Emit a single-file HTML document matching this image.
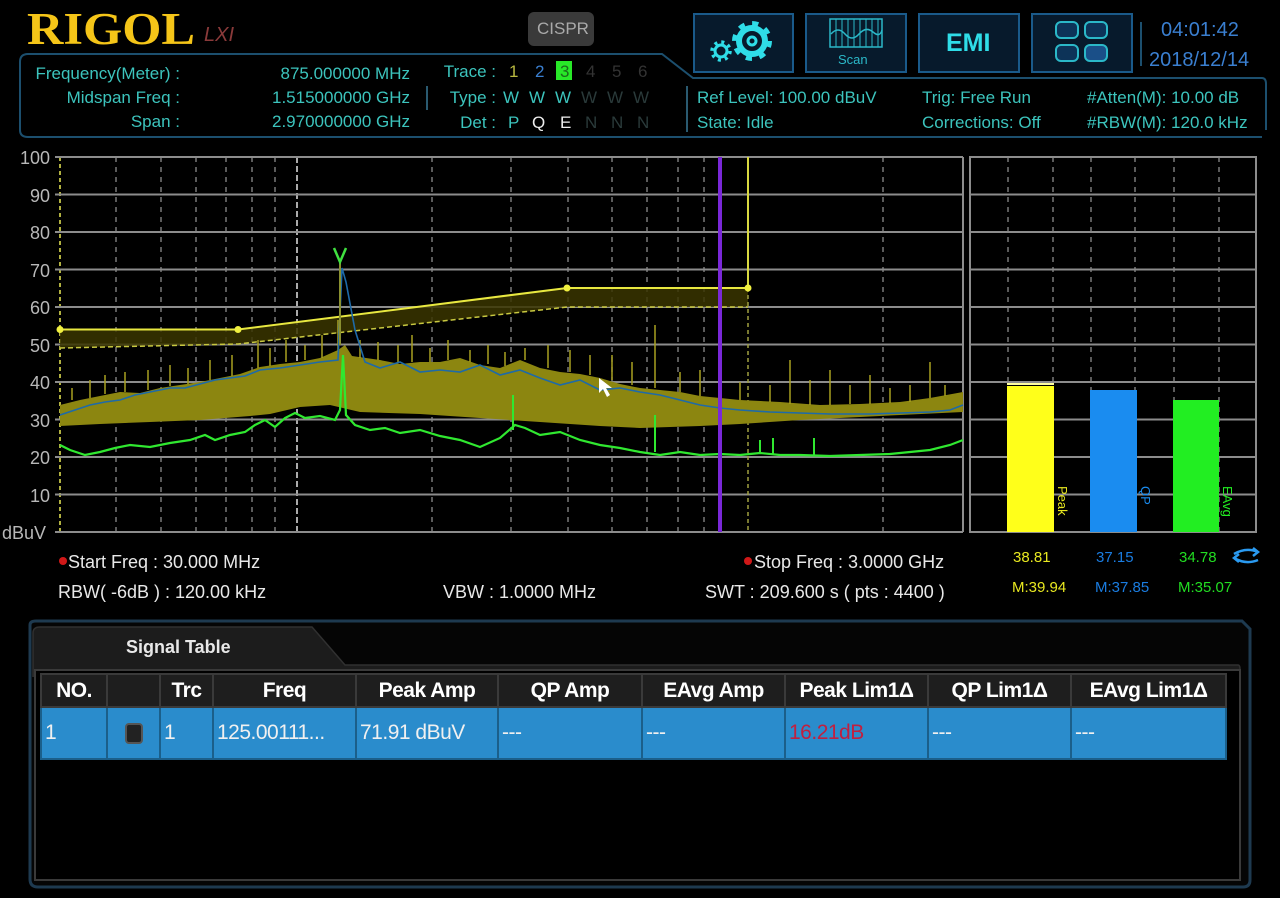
<!DOCTYPE html>
<html><head><meta charset="utf-8">
<style>
html,body{margin:0;padding:0;background:#000;}
body{width:1280px;height:898px;position:relative;overflow:hidden;font-family:"Liberation Sans",sans-serif;}
.t{position:absolute;white-space:nowrap;line-height:1;}
.c{color:#3cc4bd;font-size:17px;}
.w{color:#e8e8e8;font-size:18px;}
.ax{color:#b8b8b8;font-size:18px;text-align:right;width:50px;left:0;}
table{border-collapse:collapse;position:absolute;left:40px;top:673px;table-layout:fixed;width:1185px;}
td{border:2px solid #3a3a3a;padding:0 3px;font-size:21px;color:#fff;overflow:hidden;white-space:nowrap;}
thead td{background:#1e1e1e;font-weight:bold;text-align:center;height:31px;letter-spacing:-0.5px;}
tbody td{background:#2a8ccc;height:50px;color:#f0f0f0;border-color:#1b5f8a;letter-spacing:-0.5px;}
</style></head><body>

<div class="t" style="left:27px;top:7px;font-family:'Liberation Serif',serif;font-weight:bold;font-size:45px;color:#f5c518;transform:scaleX(1.12);transform-origin:left top;">RIGOL</div>
<div class="t" style="left:204px;top:25px;font-style:italic;font-size:20px;color:#8a3a3a;">LXI</div>
<div style="position:absolute;left:528px;top:12px;width:66px;height:34px;background:#3a3a3a;border-radius:6px;"></div>
<div class="t" style="left:537px;top:20px;font-size:17px;color:#aaa;">CISPR</div>

<svg style="position:absolute;left:0;top:0" width="1280" height="150">
 <path d="M28 54 L662 54 L693 78 L1262 78 Q1266 78 1266 84 L1266 130" fill="none" stroke="#1c4f6e" stroke-width="2"/>
 <path d="M20 62 Q20 54 28 54 M20 62 L20 130 Q20 137 28 137 L1262 137" fill="none" stroke="#1c4f6e" stroke-width="2"/>
 <line x1="427" y1="86" x2="427" y2="110" stroke="#2a5a70" stroke-width="2"/>
 <line x1="687" y1="86" x2="687" y2="132" stroke="#2a5a70" stroke-width="2"/>
 <line x1="1141" y1="22" x2="1141" y2="66" stroke="#1c4f6e" stroke-width="2"/>
 <g fill="#071a2c" stroke="#1a5a8a" stroke-width="2">
  <rect x="694" y="14" width="99" height="58"/>
  <rect x="806" y="14" width="100" height="58"/>
  <rect x="919" y="14" width="100" height="58"/>
  <rect x="1032" y="14" width="100" height="58"/>
 </g>
 <circle cx="752" cy="41" r="13" fill="none" stroke="#2fdde8" stroke-width="6"/>
 <circle cx="752" cy="41" r="17" fill="none" stroke="#2fdde8" stroke-width="6" stroke-dasharray="6 7.35"/>
 <circle cx="752" cy="41" r="4" fill="none" stroke="#2fdde8" stroke-width="3"/>
 <circle cx="721" cy="51" r="6" fill="none" stroke="#2fdde8" stroke-width="3"/>
 <circle cx="721" cy="51" r="9" fill="none" stroke="#2fdde8" stroke-width="3.5" stroke-dasharray="3 4.07"/>
 <rect x="830" y="19" width="52" height="28" fill="none" stroke="#2bb8c8" stroke-width="1.5"/>
 <path d="M836 19V47M842 19V47M848 19V47M854 19V47M860 19V47M866 19V47M872 19V47M878 19V47" stroke="#2bb8c8" stroke-width="1"/>
 <path d="M831 34 Q838 26 845 34 T859 34 T873 32 T882 30" fill="none" stroke="#2bb8c8" stroke-width="1.5"/>
 <g fill="#0d3358" stroke="#2bb8c8" stroke-width="2">
  <rect x="1056" y="22" width="22" height="16" rx="5"/>
  <rect x="1085" y="22" width="22" height="16" rx="5"/>
  <rect x="1056" y="45" width="22" height="16" rx="5"/>
  <rect x="1085" y="45" width="22" height="16" rx="5" fill="#1a4f88"/>
 </g>
</svg>
<div class="t" style="left:838px;top:53px;font-size:13px;color:#2bb8c8;">Scan</div>
<div class="t" style="left:946px;top:31px;font-size:25px;font-weight:bold;color:#2fdde8;">EMI</div>
<div class="t" style="left:1161px;top:20px;font-size:20px;color:#3a7fd0;">04:01:42</div>
<div class="t" style="left:1149px;top:50px;font-size:20px;color:#3a7fd0;">2018/12/14</div>

<div class="t c" style="left:0;width:180px;text-align:right;top:65px;">Frequency(Meter) :</div>
<div class="t c" style="left:0;width:180px;text-align:right;top:89px;">Midspan Freq :</div>
<div class="t c" style="left:0;width:180px;text-align:right;top:113px;">Span :</div>
<div class="t c" style="left:200px;width:210px;text-align:right;top:65px;">875.000000 MHz</div>
<div class="t c" style="left:200px;width:210px;text-align:right;top:89px;">1.515000000 GHz</div>
<div class="t c" style="left:200px;width:210px;text-align:right;top:113px;">2.970000000 GHz</div>
<div class="t c" style="left:400px;width:96px;text-align:right;top:63px;">Trace :</div>
<div class="t c" style="left:400px;width:96px;text-align:right;top:89px;">Type :</div>
<div class="t c" style="left:400px;width:96px;text-align:right;top:114px;">Det :</div>
<div class="t c" style="left:509px;top:63px;color:#b8b840;">1</div>
<div class="t c" style="left:535px;top:63px;color:#3a7fd0;">2</div>
<div style="position:absolute;left:556px;top:61px;width:16px;height:19px;background:#28e828;"></div>
<div class="t c" style="left:560px;top:63px;color:#1a6a1a;">3</div>
<div class="t c" style="left:586px;top:63px;color:#333;">4</div>
<div class="t c" style="left:612px;top:63px;color:#333;">5</div>
<div class="t c" style="left:638px;top:63px;color:#333;">6</div>
<div class="t c" style="left:503px;top:89px;">W</div><div class="t c" style="left:529px;top:89px;">W</div><div class="t c" style="left:555px;top:89px;">W</div>
<div class="t c" style="left:581px;top:89px;color:#2a3a3a;">W</div><div class="t c" style="left:607px;top:89px;color:#2a3a3a;">W</div><div class="t c" style="left:633px;top:89px;color:#2a3a3a;">W</div>
<div class="t c" style="left:508px;top:114px;">P</div><div class="t c" style="left:532px;top:114px;color:#eee;">Q</div><div class="t c" style="left:560px;top:114px;color:#eee;">E</div>
<div class="t c" style="left:585px;top:114px;color:#2a3a3a;">N</div><div class="t c" style="left:611px;top:114px;color:#2a3a3a;">N</div><div class="t c" style="left:637px;top:114px;color:#2a3a3a;">N</div>

<div class="t c" style="left:697px;top:89px;">Ref Level: 100.00 dBuV</div>
<div class="t c" style="left:697px;top:114px;">State: Idle</div>
<div class="t c" style="left:922px;top:89px;">Trig: Free Run</div>
<div class="t c" style="left:922px;top:114px;">Corrections: Off</div>
<div class="t c" style="left:1087px;top:89px;">#Atten(M): 10.00 dB</div>
<div class="t c" style="left:1087px;top:114px;">#RBW(M): 120.0 kHz</div>

<div class="t ax" style="top:149px;">100</div>
<div class="t ax" style="top:187px;">90</div>
<div class="t ax" style="top:224px;">80</div>
<div class="t ax" style="top:262px;">70</div>
<div class="t ax" style="top:299px;">60</div>
<div class="t ax" style="top:337px;">50</div>
<div class="t ax" style="top:374px;">40</div>
<div class="t ax" style="top:412px;">30</div>
<div class="t ax" style="top:449px;">20</div>
<div class="t ax" style="top:487px;">10</div>
<div class="t ax" style="top:524px;left:2px;width:auto;text-align:left;">dBuV</div>

<svg style="position:absolute;left:0;top:150px" width="1280" height="450" viewBox="0 150 1280 450">
 <g stroke="#8a8a8a" stroke-width="1.3" stroke-dasharray="5 5">
  <path d="M116 157V532M161 157V532M196 157V532M226 157V532M252 157V532M275 157V532M432 157V532M511 157V532M568 157V532M612 157V532M647 157V532M678 157V532M704 157V532M883 157V532"/>
 </g>
 <line x1="297" y1="157" x2="297" y2="532" stroke="#aaa" stroke-width="2" stroke-dasharray="6 3"/>
 <line x1="60" y1="157" x2="60" y2="532" stroke="#b0b040" stroke-width="2" stroke-dasharray="4 3"/>
 <g stroke="#8c8c8c" stroke-width="2">
  <path d="M55 157H963M55 194.5H963M55 232H963M55 269.5H963M55 307H963M55 344.5H963M55 382H963M55 419.5H963M55 457H963M55 494.5H963M55 532H963"/>
  <path d="M963 157V532"/>
 </g>
 <polygon points="60,329.5 238,329.5 567,288 748,288 748,307 567,307 238,344 60,348" fill="#3a3500" opacity="0.85"/>
 <polyline points="60,329.5 238,329.5 567,288 748,288" fill="none" stroke="#e8e840" stroke-width="2"/>
 <polyline points="60,348 238,344 567,307 748,307" fill="none" stroke="#c8c840" stroke-width="1.5" stroke-dasharray="5 3"/>
 <line x1="748" y1="157" x2="748" y2="288" stroke="#d8d840" stroke-width="2"/>
 <line x1="748" y1="288" x2="748" y2="532" stroke="#a0a040" stroke-width="1.5" stroke-dasharray="4 3"/>
 <circle cx="60" cy="329.5" r="3.5" fill="#f0f040"/><circle cx="238" cy="329.5" r="3.5" fill="#f0f040"/>
 <circle cx="567" cy="288" r="3.5" fill="#f0f040"/><circle cx="748" cy="288" r="3.5" fill="#f0f040"/>
 <polygon fill="#8c8610" points="60,405 80,400 100,396 120,392 140,393 160,388 180,385 200,382 220,378 240,374 260,367 280,364 300,362 320,358 338,350 345,345 352,356 380,360 400,364 420,362 440,362 460,358 480,365 500,368 520,360 540,368 560,372 580,374 600,378 620,384 640,388 660,390 680,392 700,396 720,398 740,400 780,402 820,405 860,404 900,402 930,398 963,392 963,412 900,415 800,420 740,424 700,426 640,428 600,426 540,422 480,418 420,414 360,412 330,405 300,407 270,414 250,416 200,420 150,422 100,424 60,426"/>
 <path stroke="#a8a020" stroke-width="1.5" fill="none" d="M72 400V388M90 398V380M105 394V375M125 392V372M148 390V370M170 386V365M188 384V368M210 380V360M232 376V355M258 368V340M270 366V348M286 362V340M305 360V345M322 358V335M338 352V320M360 358V340M378 360V342M398 362V345M412 362V335M430 362V348M448 360V340M470 362V350M488 364V345M505 366V352M525 360V348M548 368V345M570 372V350M590 375V355M612 380V355M632 385V362M655 388V325M680 392V372M700 396V370M720 398V375M740 400V382M770 402V385M790 404V360M810 405V380M830 405V370M850 404V385M870 404V375M890 403V388M910 402V385M930 398V362M945 396V385"/>
 <polyline fill="none" stroke="#1e6aa8" stroke-width="1.6" points="60,415 75,410 90,405 105,402 120,400 135,395 150,392 170,388 185,388 200,384 215,380 230,378 245,376 260,370 280,368 300,365 320,362 338,360 342,268 346,282 355,330 365,362 380,368 400,362 420,372 440,370 460,372 480,365 500,375 520,370 540,378 560,385 580,380 600,390 620,388 640,392 660,395 680,400 700,405 720,408 740,410 770,412 800,413 830,414 870,414 900,413 930,412 950,410 963,405"/>
 <polyline fill="none" stroke="#30e830" stroke-width="2.2" points="60,445 70,450 85,455 100,452 115,448 130,445 150,447 170,443 190,440 205,435 215,440 230,435 245,432 255,425 265,420 275,427 285,418 295,413 305,418 320,416 335,420 340,410 343,355 346,415 355,425 370,430 385,428 400,433 420,430 440,436 460,440 480,447 500,438 515,425 525,428 540,435 560,432 580,440 600,445 620,448 640,452 660,455 680,452 700,455 720,454 740,455 760,453 780,455 800,455 830,456 860,455 890,454 910,452 930,450 950,445 963,440"/>
 <path stroke="#30e830" stroke-width="2" d="M513 430V395M655 452V415M760 454V440M773 454V438M814 455V438"/>
 <line x1="340" y1="262" x2="340" y2="345" stroke="#8a9030" stroke-width="2"/>
 <path d="M334 248 L340 262 L346 248" fill="none" stroke="#40e040" stroke-width="2.5"/>
 <line x1="720" y1="157" x2="720" y2="532" stroke="#7a28d8" stroke-width="4"/>
 <path d="M599 378 L599 393 L603 389 L607 397 L610 395 L606 388 L612 388 Z" fill="#fff"/>

 <rect x="970" y="157" width="286" height="375" fill="none" stroke="#8c8c8c" stroke-width="2"/>
 <g stroke="#8c8c8c" stroke-width="2"><path d="M970 194.5H1256M970 232H1256M970 269.5H1256M970 307H1256M970 344.5H1256M970 382H1256M970 419.5H1256M970 457H1256M970 494.5H1256"/></g>
 <g stroke="#8a8a8a" stroke-width="1.3" stroke-dasharray="5 5"><path d="M1008 157V532M1053 157V532M1091 157V532M1135 157V532M1174 157V532M1219 157V532"/></g>
 <rect x="1007" y="386" width="47" height="146" fill="#ffff1a"/>
 <line x1="1007" y1="384" x2="1054" y2="384" stroke="#ffffa0" stroke-width="2"/>
 <rect x="1090" y="390" width="47" height="142" fill="#1a8cf0"/>
 <rect x="1173" y="400" width="46" height="132" fill="#22ee22"/>
 <text x="1058" y="486" transform="rotate(90 1058 486)" font-family="Liberation Sans,sans-serif" font-size="13" fill="#e8e820">Peak</text>
 <text x="1141" y="486" transform="rotate(90 1141 486)" font-family="Liberation Sans,sans-serif" font-size="13" fill="#1a8cf0">QP</text>
 <text x="1223" y="486" transform="rotate(90 1223 486)" font-family="Liberation Sans,sans-serif" font-size="13" fill="#22ee22">EAvg</text>
 <path d="M1234 554 Q1246 547 1258 552 M1253 548 L1258 552 L1253 556 M1234 558 Q1246 565 1258 560 M1239 554 L1234 558 L1239 562" fill="none" stroke="#2a9af0" stroke-width="2.5"/>
 <circle cx="63" cy="561" r="4" fill="#d01818"/>
 <circle cx="748" cy="561" r="4" fill="#d01818"/>
</svg>

<div class="t w" style="left:68px;top:553px;">Start Freq : 30.000 MHz</div>
<div class="t w" style="left:58px;top:583px;">RBW( -6dB ) : 120.00 kHz</div>
<div class="t w" style="left:443px;top:583px;">VBW : 1.0000 MHz</div>
<div class="t w" style="left:754px;top:553px;">Stop Freq : 3.0000 GHz</div>
<div class="t w" style="left:705px;top:583px;">SWT : 209.600 s ( pts : 4400 )</div>
<div class="t" style="left:1013px;top:550px;font-size:15px;color:#e8e820;">38.81</div>
<div class="t" style="left:1096px;top:550px;font-size:15px;color:#1a7ce0;">37.15</div>
<div class="t" style="left:1179px;top:550px;font-size:15px;color:#22dd22;">34.78</div>
<div class="t" style="left:1012px;top:580px;font-size:15px;color:#e8e820;">M:39.94</div>
<div class="t" style="left:1095px;top:580px;font-size:15px;color:#1a7ce0;">M:37.85</div>
<div class="t" style="left:1178px;top:580px;font-size:15px;color:#22dd22;">M:35.07</div>

<svg style="position:absolute;left:0;top:615px" width="1280" height="283">
 <path d="M30 10 Q30 6 36 6 L1242 6 L1250 14 L1250 265 Q1250 272 1243 272 L38 272 Q30 272 30 264 Z" fill="#050505" stroke="#1e3a50" stroke-width="3"/>
 <path d="M33 62 L33 18 Q33 12 40 12 L312 12 L345 50 L1238 50 Q1240 50 1240 54" fill="#1c1c1c" stroke="#303030" stroke-width="1.5"/>
 <rect x="35" y="55" width="1205" height="210" fill="#000" stroke="#3a3a3a" stroke-width="2"/>
</svg>
<div class="t" style="left:126px;top:638px;font-size:18px;color:#e8e8e8;font-weight:bold;">Signal Table</div>

<table>
 <colgroup><col style="width:66px"><col style="width:53px"><col style="width:53px"><col style="width:143px"><col style="width:142px"><col style="width:144px"><col style="width:143px"><col style="width:143px"><col style="width:143px"><col style="width:155px"></colgroup>
 <thead><tr>
  <td>NO.</td><td></td><td>Trc</td><td>Freq</td><td>Peak Amp</td><td>QP Amp</td><td>EAvg Amp</td><td>Peak Lim1Δ</td><td>QP Lim1Δ</td><td>EAvg Lim1Δ</td>
 </tr></thead>
 <tbody><tr>
  <td>1</td><td style="text-align:center;"><span style="display:inline-block;width:14px;height:17px;background:#222;border:2px solid #555;border-radius:4px;vertical-align:middle;"></span></td><td>1</td><td>125.00111...</td><td>71.91 dBuV</td><td>---</td><td>---</td><td style="color:#c02040;">16.21dB</td><td>---</td><td>---</td>
 </tr></tbody>
</table>
</body></html>
